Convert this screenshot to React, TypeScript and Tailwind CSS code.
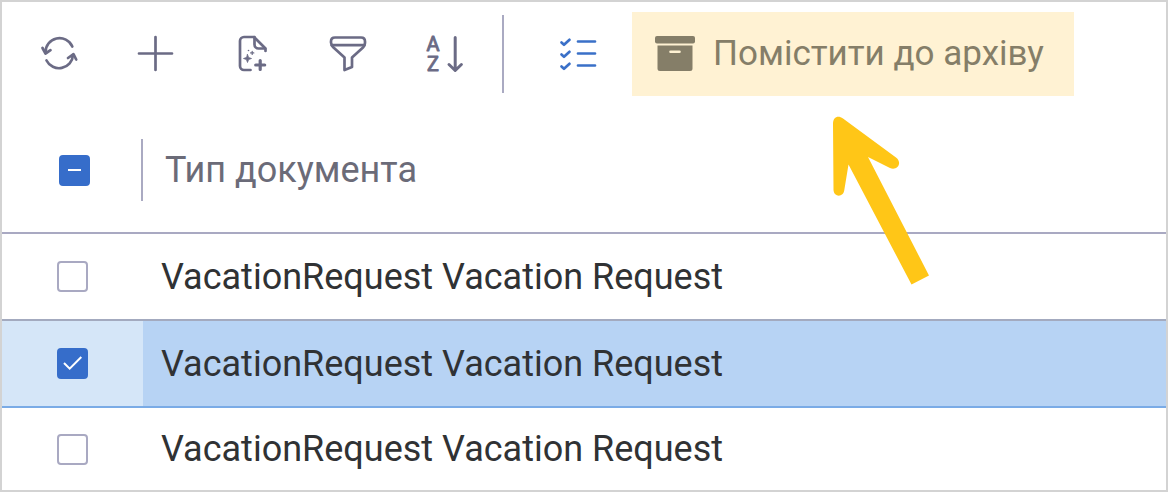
import React, { useEffect, useRef, useState } from 'react';

const initialRows = [
  { id: 1, type: 'VacationRequest Vacation Request', checked: false },
  { id: 2, type: 'VacationRequest Vacation Request', checked: true },
  { id: 3, type: 'VacationRequest Vacation Request', checked: false },
];

interface IconProps {
  children: React.ReactNode;
}

function Icon({ children }: IconProps) {
  return (
    <svg
      className="size-12"
      viewBox="0 0 48 48"
      fill="none"
      stroke="currentColor"
      strokeWidth="2.7"
      strokeLinecap="round"
      strokeLinejoin="round"
      aria-hidden="true"
    >
      {children}
    </svg>
  );
}

interface ToolButtonProps {
  label: string;
  active?: boolean;
  children: React.ReactNode;
}

function ToolButton({ label, active = false, children }: ToolButtonProps) {
  return (
    <button
      type="button"
      aria-label={label}
      className={`size-12 shrink-0 cursor-pointer ${active ? 'text-[#3a70c8]' : 'text-[#6b6b85]'}`}
    >
      <Icon>{children}</Icon>
    </button>
  );
}

interface CheckboxProps {
  label: string;
  checked: boolean;
  indeterminate?: boolean;
  onChange: () => void;
}

function Checkbox({ label, checked, indeterminate = false, onChange }: CheckboxProps) {
  const ref = useRef<HTMLInputElement>(null);

  useEffect(() => {
    if (ref.current) ref.current.indeterminate = indeterminate;
  }, [indeterminate]);

  return (
    <span className="grid size-[31px]">
      <input
        ref={ref}
        type="checkbox"
        aria-label={label}
        checked={checked}
        onChange={onChange}
        className="col-start-1 row-start-1 size-[31px] cursor-pointer appearance-none rounded-[4px] border-2 border-[#a9a9c2] bg-white checked:border-[#366dca] checked:bg-[#366dca] indeterminate:border-[#366dca] indeterminate:bg-[#366dca]"
      />
      <svg
        className="pointer-events-none col-start-1 row-start-1 size-[31px]"
        viewBox="0 0 31 31"
        fill="none"
        stroke="white"
        strokeWidth="2"
        aria-hidden="true"
      >
        {indeterminate && <path d="M9 15h13" />}
        {!indeterminate && checked && <path d="M7 15l5.7 5.7L24.3 9" />}
      </svg>
    </span>
  );
}

function Toolbar() {
  return (
    <div className="flex items-center pt-[10px] pb-3 pl-[33px]">
      <div className="flex items-center gap-12">
        <ToolButton label="Оновити">
          <path d="M10.5 22.5A14 14 0 0 1 37.3 16.5" />
          <path d="M7.5 18l3 5.5L15.5 20.2" />
          <path d="M11.5 30.5A14 14 0 0 0 38 25" />
          <path d="M33 28l5.5-3.8L41.2 29.5" />
        </ToolButton>

        <ToolButton label="Додати">
          <path d="M24.5 7v33M8 23.5h33" />
        </ToolButton>

        <ToolButton label="Створити за шаблоном">
          <path d="M23.5 40H17a4 4 0 0 1-4-4V11a4 4 0 0 1 4-4h10L38.500 18.500V21" />
          <path d="M27.500 7v7.500a4 4 0 0 0 4 4H38" />
          <path d="M33.200 30.500v9M28.700 35h9" strokeWidth="3.2" />
          <path
            d="M20.500 24.500l1.100 3 2.900 1-2.900 1-1.100 3-1.100-3-2.900-1 2.900-1z"
            fill="currentColor"
            strokeWidth="0.8"
          />
          <path d="M25.200 21.300v3.200M23.600 22.900h3.200" strokeWidth="1.2" />
          <circle cx="21.5" cy="20.5" r="0.8" fill="currentColor" stroke="none" />
        </ToolButton>

        <ToolButton label="Фільтр">
          <path d="M12 7.500h26q4 0 4 4v1.500q0 2.500-2 4.500L29 27.500V37L21.500 40V27.500L10.500 17.500Q8 15 8 12.500v-1q0-4 4-4z" />
          <path d="M9 15.200h32" />
        </ToolButton>

        <ToolButton label="Сортування">
          <g
            className="font-[Roboto,sans-serif] text-[20px] font-normal"
            fill="currentColor"
            strokeWidth="0.9"
            textAnchor="middle"
          >
            <text x="14" y="21">A</text>
            <text x="14" y="41">Z</text>
          </g>
          <path d="M36.200 7.500V40M30 34.500l6.200 6 6.200-6" strokeWidth="3" />
        </ToolButton>
      </div>

      <div className="mr-[50px] ml-[35px] h-[78px] w-0.5 shrink-0 bg-[#aaaac2]" />

      <ToolButton label="Вибір рядків" active>
        <path d="M7.500 12.500l2.500 2.300 5.500-5" />
        <path d="M7.500 24.500l2.500 2.300 5.500-5" />
        <path d="M7.500 36.500l2.500 2.300 5.500-5" />
        <path d="M24 11.500h17M24 23.500h17M24 35.500h17" />
      </ToolButton>

      <button
        type="button"
        className="ml-[30px] flex h-[84px] cursor-pointer items-center gap-[18px] bg-[#fff2d3] pr-[30px] pl-[23px] text-[35px] leading-[42px] whitespace-nowrap text-[#857e68]"
      >
        <svg className="h-9 w-10" viewBox="0 0 40 36" fill="currentColor" aria-hidden="true">
          <rect x="0" y="0" width="40" height="7.5" rx="2" />
          <path
            fillRule="evenodd"
            d="M2.5 9.500h35V32.500a2.500 2.500 0 0 1-2.500 2.500H5A2.500 2.500 0 0 1 2.500 32.500zM15.500 14.500a1.200 1.200 0 0 0 0 2.600h9a1.200 1.200 0 0 0 0-2.600z"
          />
        </svg>
        <span>Помістити до архіву</span>
      </button>
    </div>
  );
}

export default function App() {
  const [rows, setRows] = useState(initialRows);
  const allChecked = rows.every((row) => row.checked);
  const someChecked = rows.some((row) => row.checked);

  const toggleAll = () => setRows(rows.map((row) => ({ ...row, checked: !allChecked })));
  const toggleRow = (id: number) =>
    setRows(rows.map((row) => (row.id === id ? { ...row, checked: !row.checked } : row)));

  return (
    <main className="relative min-h-screen overflow-hidden border-2 border-[#d3d3d3] bg-white font-[Roboto,sans-serif]">
      <Toolbar />

      <table className="w-full border-separate border-spacing-0 text-left text-[36px] leading-[42px]">
        <thead>
          <tr className="h-[126px]">
            <th className="w-[141px] border-b-2 border-[#a9a9c2] p-0 pl-[57px]">
              <Checkbox
                label="Вибрати всі"
                checked={allChecked}
                indeterminate={someChecked && !allChecked}
                onChange={toggleAll}
              />
            </th>
            <th className="border-b-2 border-[#a9a9c2] p-0 font-normal text-[#6b6b78]">
              {/* Column divider sits left of the title */}
              <div className="-ml-0.5 flex h-[62px] items-center border-l-2 border-[#aaaac2] pl-[22px]">
                Тип документа
              </div>
            </th>
          </tr>
        </thead>
        <tbody>
          {rows.map((row, index) => {
            const last = index === rows.length - 1;
            const line = last ? '' : row.checked ? 'border-b-2 border-[#7aabe6]' : 'border-b-2 border-[#a3aabf]';
            return (
              <tr key={row.id} className={last ? 'h-[82px]' : 'h-[87px]'}>
                <td className={`p-0 pl-[55px] ${line} ${row.checked ? 'bg-[#d5e6f8]' : ''}`}>
                  <Checkbox
                    label={`Вибрати рядок ${row.id}`}
                    checked={row.checked}
                    onChange={() => toggleRow(row.id)}
                  />
                </td>
                <td className={`p-0 pl-[18px] text-[#303234] ${line} ${row.checked ? 'bg-[#b7d3f4]' : ''}`}>
                  {row.type}
                </td>
              </tr>
            );
          })}
        </tbody>
      </table>

      {/* Pointer to the archive button */}
      <svg
        className="pointer-events-none absolute top-[98px] left-[808px] h-[200px] w-[150px]"
        viewBox="0 0 150 200"
        fill="#ffc617"
        aria-hidden="true"
      >
        <path d="M23 24C23 17 28 15 33 18.500L86 57.500C93 63 87 71 80 68L58 57L119 175.500L101.500 184.500L38.500 64.500L34.300 90C33.500 97.500 24 97.500 23.500 90z" />
      </svg>
    </main>
  );
}
